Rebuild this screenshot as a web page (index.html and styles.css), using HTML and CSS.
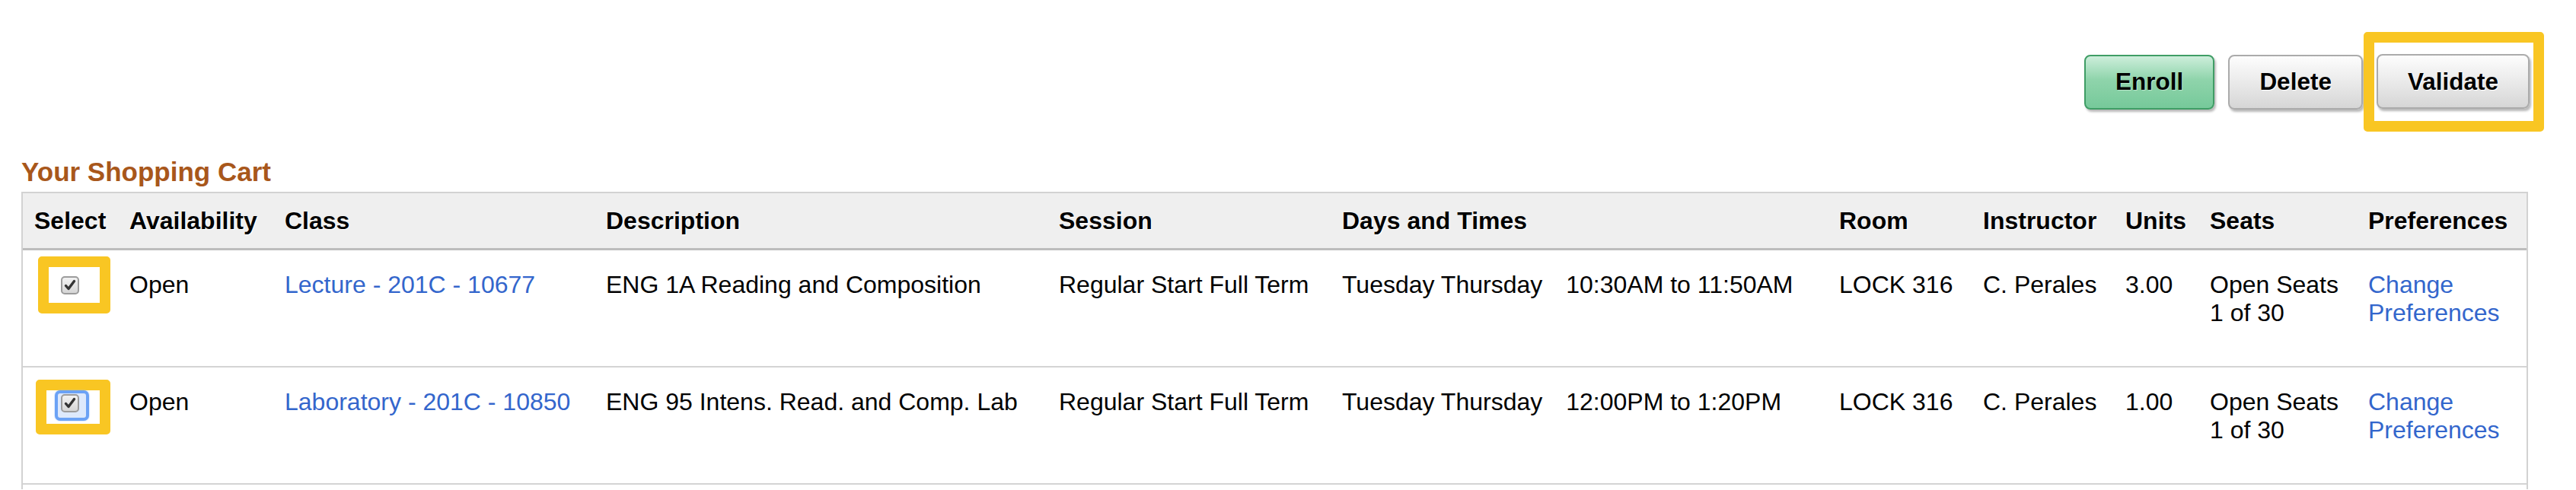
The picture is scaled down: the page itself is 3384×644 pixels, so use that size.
FILE: index.html
```html
<!DOCTYPE html>
<html lang="en">
<head>
  <meta charset="UTF-8">
  <title>Shopping Cart - Enrollment</title>
  <link rel="stylesheet" href="styles.css">
</head>
<body>

  <div class="page">
    <div class="toolbar">
      <button class="btn btn-enroll">Enroll</button>
      <button class="btn btn-delete">Delete</button>
      <span class="mark mark-btn">
        <button class="btn">Validate</button>
      </span>
    </div>

    <h2 class="cart-title">Your Shopping Cart</h2>

    <table class="cart">
      <colgroup>
        <col class="c-select">
        <col class="c-avail">
        <col class="c-class">
        <col class="c-desc">
        <col class="c-session">
        <col class="c-days">
        <col class="c-room">
        <col class="c-instr">
        <col class="c-units">
        <col class="c-seats">
        <col class="c-prefs">
      </colgroup>
      <thead>
        <tr>
          <th>Select</th>
          <th>Availability</th>
          <th>Class</th>
          <th>Description</th>
          <th>Session</th>
          <th>Days and Times</th>
          <th>Room</th>
          <th>Instructor</th>
          <th>Units</th>
          <th>Seats</th>
          <th>Preferences</th>
        </tr>
      </thead>
      <tbody>
        <tr>
          <td class="sel">
            <span class="mark">
              <svg class="check" width="24" height="24" viewBox="0 0 24 24">
                <defs>
                  <linearGradient id="cbg1" x1="0" y1="0" x2="0" y2="1">
                    <stop offset="0" stop-color="#f4f4f4"/>
                    <stop offset="1" stop-color="#d4d4d4"/>
                  </linearGradient>
                </defs>
                <rect x="1" y="1" width="22" height="22" rx="4" fill="url(#cbg1)" stroke="#9c9c9c" stroke-width="2"/>
                <path d="M6.5 12.5 L10 16.5 L17.5 6.5" fill="none" stroke="#333" stroke-width="3.4" stroke-linecap="round" stroke-linejoin="round"/>
              </svg>
            </span>
          </td>
          <td>Open</td>
          <td><a href="#">Lecture - 201C - 10677</a></td>
          <td>ENG 1A Reading and Composition</td>
          <td>Regular Start Full Term</td>
          <td><div class="when"><span>Tuesday Thursday</span><span>10:30AM to 11:50AM</span></div></td>
          <td>LOCK 316</td>
          <td>C. Perales</td>
          <td>3.00</td>
          <td>Open Seats 1 of 30</td>
          <td><a href="#">Change Preferences</a></td>
        </tr>
        <tr>
          <td class="sel">
            <span class="mark mark-focus">
              <span class="ring">
                <svg class="check" width="24" height="24" viewBox="0 0 24 24">
                  <defs>
                    <linearGradient id="cbg2" x1="0" y1="0" x2="0" y2="1">
                      <stop offset="0" stop-color="#f4f4f4"/>
                      <stop offset="1" stop-color="#d4d4d4"/>
                    </linearGradient>
                  </defs>
                  <rect x="1" y="1" width="22" height="22" rx="4" fill="url(#cbg2)" stroke="#9c9c9c" stroke-width="2"/>
                  <path d="M6.5 12.5 L10 16.5 L17.5 6.5" fill="none" stroke="#333" stroke-width="3.4" stroke-linecap="round" stroke-linejoin="round"/>
                </svg>
              </span>
            </span>
          </td>
          <td>Open</td>
          <td><a href="#">Laboratory - 201C - 10850</a></td>
          <td>ENG 95 Intens. Read. and Comp. Lab</td>
          <td>Regular Start Full Term</td>
          <td><div class="when"><span>Tuesday Thursday</span><span>12:00PM to 1:20PM</span></div></td>
          <td>LOCK 316</td>
          <td>C. Perales</td>
          <td>1.00</td>
          <td>Open Seats 1 of 30</td>
          <td><a href="#">Change Preferences</a></td>
        </tr>
        <tr class="filler">
          <td colspan="11"></td>
        </tr>
      </tbody>
    </table>
  </div>

</body>
</html>
```

FILE: styles.css
```css
body {
  margin: 0;
  font-family: 'Liberation Sans', Arial, sans-serif;
  background-color: #ffffff;
  color: #000;
}

.page {
  padding-left: 28px;
}

.toolbar {
  width: 3314px;
  margin-top: 42px;
  display: flex;
  justify-content: flex-end;
  align-items: center;
}

.btn {
  height: 72px;
  padding: 0 39px;
  font-family: 'Liberation Sans', Arial, sans-serif;
  font-size: 31.5px;
  font-weight: bold;
  color: #000;
  text-shadow: 1px 1px 0 #fff;
  border: 2px solid #ababab;
  border-radius: 8px;
  background: linear-gradient(#fdfdfd, #ececec 45%, #d6d6d6);
  box-shadow: 2px 3px 3px rgba(0, 0, 0, 0.28);
  cursor: pointer;
}

.btn-enroll {
  border-color: #3f9d65;
  background: linear-gradient(#cdeedb, #8fd4ab 45%, #76c99a);
  text-shadow: 1px 1px 0 #b9e4ca;
  margin-right: 18px;
}

.btn-delete {
  margin-right: 1px;
}

/* yellow highlight boxes */
.mark {
  display: inline-block;
  border: 14px solid #f9c623;
  border-radius: 5px;
  background: #fff;
  padding: 12px 27px 11px 16px;
  line-height: 0;
}

.mark-btn {
  padding: 15px 5px 16px 3px;
  line-height: normal;
}

.mark-focus {
  padding: 0 14px 4px 11px;
  margin: 8px 0 0 -3px;
}

.ring {
  display: inline-block;
  border: 4px solid #6ba2f5;
  border-radius: 7px;
  padding: 1px 9px 7px 4px;
  background: #dde9fc;
  box-shadow: 0 0 2px #9cc0f8;
}

.check {
  display: block;
}

.cart-title {
  margin: 33px 0 6px;
  font-size: 35px;
  line-height: 40px;
  color: #a8571b;
}

table.cart {
  width: 3293px;
  table-layout: fixed;
  border-collapse: separate;
  border-spacing: 0;
  border: 2px solid #d2d2d2;
  border-bottom: none;
  font-size: 32px;
  line-height: 37px;
}

.c-select { width: 125px; }
.c-avail { width: 204px; }
.c-class { width: 422px; }
.c-desc { width: 595px; }
.c-session { width: 372px; }
.c-days { width: 653px; }
.c-room { width: 189px; }
.c-instr { width: 187px; }
.c-units { width: 111px; }
.c-seats { width: 208px; }
.c-prefs { width: 223px; }

th {
  height: 72px;
  padding: 0 0 0 15px;
  text-align: left;
  vertical-align: middle;
  background-color: #efefef;
  border-bottom: 3px solid #bdbdbd;
  text-shadow: 1px 1px 0 #fff;
  white-space: nowrap;
}

td {
  padding: 27px 8px 51px 15px;
  vertical-align: top;
  border-bottom: 2px solid #d4d4d4;
}

td.sel {
  padding: 8px 0 0 20px;
}

.when {
  display: flex;
  gap: 31px;
  white-space: nowrap;
}

a {
  color: #3366cc;
  text-decoration: none;
}

.filler td {
  height: 6px;
  padding: 0;
  border-bottom: none;
}
```
